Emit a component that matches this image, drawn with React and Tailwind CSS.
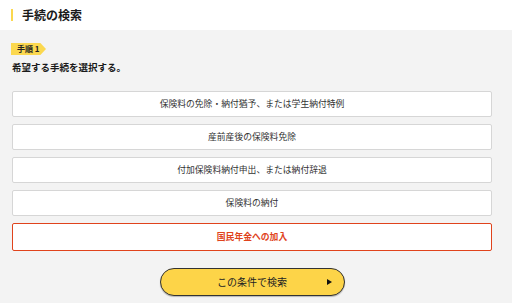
export default function App() {
  const items = [
    "保険料の免除・納付猶予、または学生納付特例",
    "産前産後の保険料免除",
    "付加保険料納付申出、または納付辞退",
    "保険料の納付",
  ];
  return (
    <div className="w-[512px] h-[303px] overflow-hidden bg-[#f3f3f3] font-['Noto_Sans_CJK_JP','Noto_Sans',sans-serif] text-[#222]">
      <div className="h-[30px] bg-white flex items-center pl-[11px]">
        <div className="w-[2px] h-[12px] bg-[#fbd84f] mr-[9px]" />
        <div className="text-[12px] font-bold leading-none text-[#1a1a1a]">手続の検索</div>
      </div>
      <div className="pl-[12px] pr-[20px] pt-[13px]">
        <div className="ml-[-1px] w-[35px] h-[12px] bg-[#fbd84f] flex items-center pl-[6px] [clip-path:polygon(0_0,84%_0,100%_50%,84%_100%,0_100%)]">
          <span className="text-[8px] font-bold leading-none text-[#222]">手順 1</span>
        </div>
        <div className="mt-[5px] text-[9.5px] font-bold leading-[14px] text-[#1a1a1a]">希望する手続を選択する。</div>
        <div className="mt-[17px] flex flex-col gap-[7px]">
          {items.map((t) => (
            <div key={t} className="h-[26px] bg-white border border-[#d6d6d6] rounded-[2px] flex items-center justify-center text-[8.8px] leading-none text-[#333]">
              {t}
            </div>
          ))}
          <div className="h-[28px] bg-white border border-[#e0431c] rounded-[2px] flex items-center justify-center text-[8.8px] font-bold leading-none text-[#e0431c]">
            国民年金への加入
          </div>
        </div>
        <div className="mt-[17px] flex justify-center">
          <button className="relative w-[185px] h-[28px] rounded-full bg-[#fdd448] border border-[#333] shadow-[0_1px_1px_rgba(0,0,0,0.25)] flex items-center justify-center text-[10px] leading-none text-[#222]">
            この条件で検索
            <span className="absolute right-[12px] top-1/2 -translate-y-1/2 w-0 h-0 border-y-[3px] border-y-transparent border-l-[5px] border-l-[#111]" />
          </button>
        </div>
      </div>
    </div>
  );
}
